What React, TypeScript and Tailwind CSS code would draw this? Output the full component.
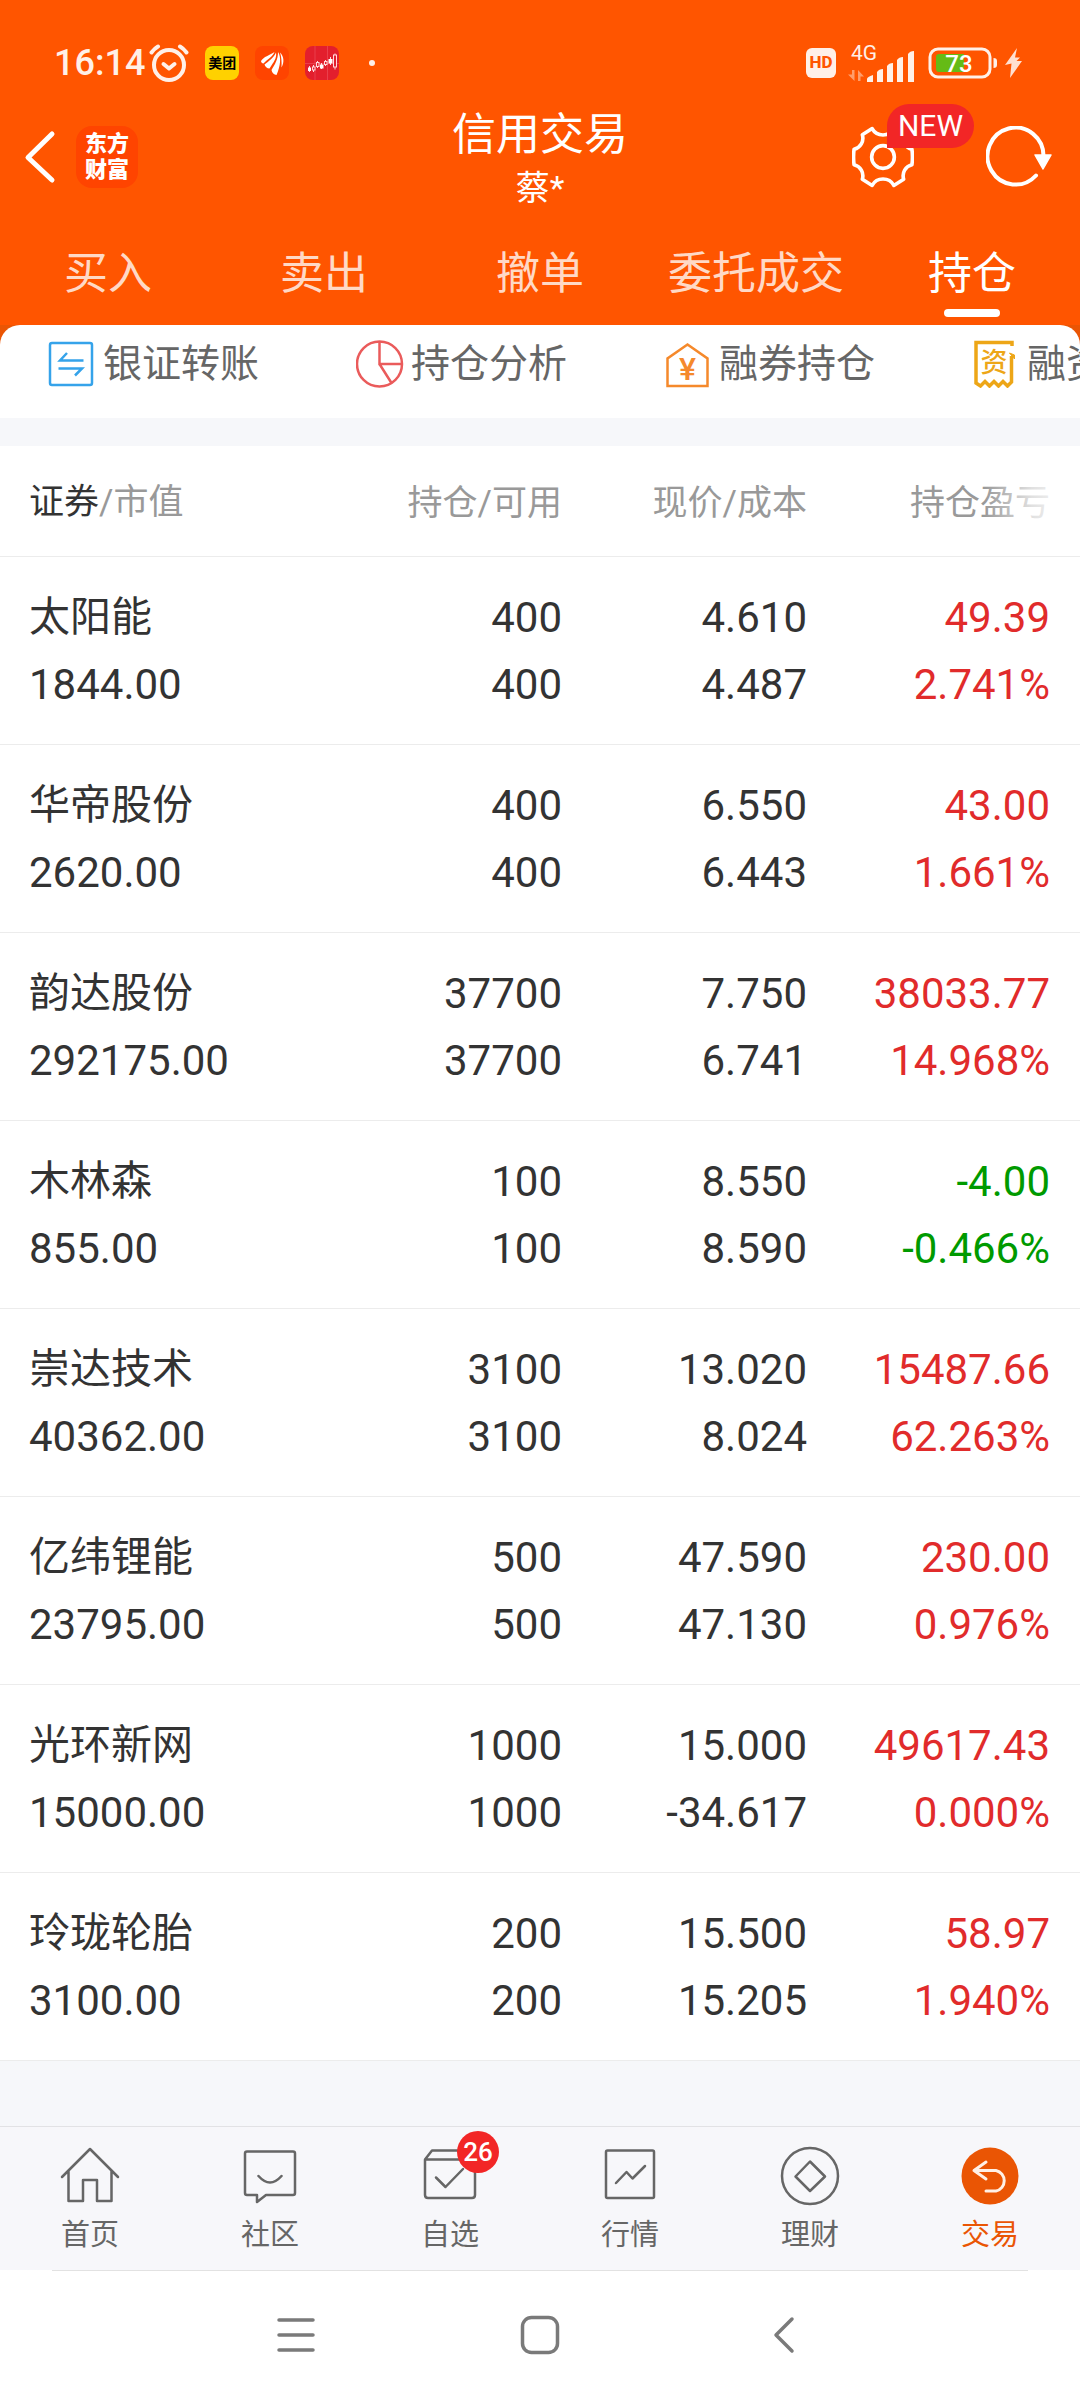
import { useState, type ReactNode } from "react";
import clsx from "clsx";

interface Holding {
  name: string;
  value: string;
  held: string;
  available: string;
  price: string;
  cost: string;
  profit: string;
  rate: string;
}

const holdings: Holding[] = [
  { name: "太阳能", value: "1844.00", held: "400", available: "400", price: "4.610", cost: "4.487", profit: "49.39", rate: "2.741%" },
  { name: "华帝股份", value: "2620.00", held: "400", available: "400", price: "6.550", cost: "6.443", profit: "43.00", rate: "1.661%" },
  { name: "韵达股份", value: "292175.00", held: "37700", available: "37700", price: "7.750", cost: "6.741", profit: "38033.77", rate: "14.968%" },
  { name: "木林森", value: "855.00", held: "100", available: "100", price: "8.550", cost: "8.590", profit: "-4.00", rate: "-0.466%" },
  { name: "崇达技术", value: "40362.00", held: "3100", available: "3100", price: "13.020", cost: "8.024", profit: "15487.66", rate: "62.263%" },
  { name: "亿纬锂能", value: "23795.00", held: "500", available: "500", price: "47.590", cost: "47.130", profit: "230.00", rate: "0.976%" },
  { name: "光环新网", value: "15000.00", held: "1000", available: "1000", price: "15.000", cost: "-34.617", profit: "49617.43", rate: "0.000%" },
  { name: "玲珑轮胎", value: "3100.00", held: "200", available: "200", price: "15.500", cost: "15.205", profit: "58.97", rate: "1.940%" },
];

const tabs = ["买入", "卖出", "撤单", "委托成交", "持仓"];

/* ---------- status bar ---------- */

function StatusBar() {
  return (
    <div className="flex h-[103px] items-center justify-between pt-[22px] pr-14 pl-[54px] text-[#fff0e8]">
      <div className="flex items-center">
        <span className="text-[36px] leading-none font-medium">16:14</span>
        <svg className="ml-1 h-10 w-10" viewBox="0 0 40 40" fill="none" stroke="currentColor" strokeWidth="4" strokeLinecap="round" strokeLinejoin="round">
          <circle cx="20" cy="22" r="15" />
          <path d="M14.500 21l5.500 4.500 5.500-4.500" />
          <path d="M2.500 9.500q3-4 6.500-6M37.500 9.500q-3-4-6.500-6" />
        </svg>
        <span className="ml-4 flex h-[34px] w-[34px] items-center justify-center rounded-lg bg-[#ffd100] text-[14px] leading-none font-bold text-black">美团</span>
        <svg className="ml-4 h-[34px] w-[34px]" viewBox="0 0 34 34">
          <rect width="34" height="34" rx="8" fill="#ff4400" />
          <g fill="#fff">
            <path d="M6 15C9 10.500 14 9.500 19.500 6C17.500 11 12.500 13 8.500 17.500C7 17.500 6.200 16.500 6 15Z" />
            <path d="M9.500 18.500C14 15 18.500 12 21 6.500C22 12.500 18.500 16 14.500 22.500C12 22.500 10 20.800 9.500 18.500Z" />
            <path d="M16.500 24C20 18 23 13.500 23 6C26.500 11 25.500 20 21.500 29C19 28.500 17 27 16.500 24Z" />
            <path d="M25 6.500C29 10.500 29.500 16 26.500 21.500C26.800 15.500 26.500 11.500 25 6.500Z" />
          </g>
        </svg>
        <svg className="ml-4 h-[34px] w-[34px]" viewBox="0 0 34 34">
          <rect width="34" height="34" rx="8" fill="#e31f2d" />
          <path d="M0 17.500h34M10 0v34M22.500 0v34" stroke="#ee5561" strokeWidth="0.600" />
          <g fill="none" stroke="#ffdadd">
            <path d="M4.500 20v6M8.500 19v7M12.500 15v7M16.500 17v6M20.500 14v6M25.500 11v8M30 7.500v16" />
            <rect x="7.500" y="21" width="2.500" height="3" fill="#e31f2d" />
            <rect x="11.500" y="16.500" width="2.500" height="4" fill="#e31f2d" />
            <rect x="19.500" y="15.500" width="2.500" height="3" fill="#e31f2d" />
            <rect x="28.500" y="9" width="3" height="12" fill="#e31f2d" />
          </g>
          <path d="M3 21.500h3v3.500h-3zM15 18.500h3.500v4h-3.500zM23.500 13h4v4.500h-4z" fill="#fff" />
        </svg>
        <span className="ml-[30px] h-[6px] w-[6px] rounded-full bg-current" />
      </div>

      <div className="flex items-center">
        <span className="flex h-[30px] w-[30px] items-center justify-center rounded-md bg-[#fff0e8] text-[17px] leading-none font-extrabold text-[#ff5500]">HD</span>
        <svg className="ml-3 h-12 w-[68px]" viewBox="0 0 68 48">
          <text x="3" y="21" fontSize="21" fill="currentColor">4G</text>
          <g fill="#ff9d6b">
            <path d="M4 31h2.500v11L0 35.500h4zM10 31l6 6.500h-3.500V42H10z" />
          </g>
          <g fill="currentColor">
            <path d="M19 40q0-2 6-4v7h-6zM29 33q2-3 6-3v13h-6zM39 27q2-3 6-3v19h-6zM49 21q2-3 6-3v25h-6zM60 15q2-3 6-3v31h-6z" />
          </g>
        </svg>
        <svg className="ml-3 h-8 w-[70px]" viewBox="0 0 70 32">
          <rect x="2" y="2" width="60" height="28" rx="8" fill="none" stroke="currentColor" strokeWidth="3" />
          <path d="M11 7h25v18H11q-3 0-3-3V10q0-3 3-3z" fill="#65bb16" />
          <path d="M65.500 11q3.500 0 3.500 3v4q0 3-3.500 3z" fill="currentColor" />
          <text x="31" y="24.500" textAnchor="middle" fontSize="24" fontWeight="500" fill="#fff">73</text>
        </svg>
        <svg className="ml-[6px] h-8 w-5" viewBox="0 0 20 32" fill="#ffe0d1">
          <path d="M13 1L1 18l6.500-1.500L6 31l12-17h-5.500l3.500-3.500H11z" />
        </svg>
      </div>
    </div>
  );
}

/* ---------- title ---------- */

function TitleBar() {
  return (
    <div className="grid grid-cols-[1fr_auto_1fr] items-center text-white">
      <div className="flex items-center pl-6">
        <button type="button" aria-label="返回" className="flex">
          <svg className="h-[54px] w-8" viewBox="0 0 32 54" fill="none" stroke="currentColor" strokeWidth="5" strokeLinecap="round" strokeLinejoin="round">
            <path d="M28 4L4 27.500L28 50" />
          </svg>
        </button>
        <a href="#home" className="ml-5 flex h-[62px] w-[62px] items-center justify-center rounded-2xl bg-[#ff4400] text-center text-[22px] leading-[26px] font-black">
          东方
          <br />
          财富
        </a>
      </div>

      <div className="pt-0.5 text-center">
        <h1 className="text-[44px] leading-[60px]">信用交易</h1>
        <p className="text-[34px] leading-[46px]">蔡*</p>
      </div>

      <div className="flex items-center justify-end gap-[72px] pr-7">
        <button type="button" aria-label="设置" className="relative flex">
          <svg className="h-[62px] w-[62px]" viewBox="0 0 60 60" fill="none" stroke="currentColor" strokeWidth="3.500" strokeLinejoin="round">
            <path d="M58 22.500Q59 30 58 37.500A11 11 0 0 0 50 51.500L40.500 57.500A12 12 0 0 0 19.500 57.500L10 51.500A11 11 0 0 0 2 37.500Q1 30 2 22.500A11 11 0 0 0 10 8.500L19.500 2.500A12 12 0 0 0 40.500 2.500L50 8.500A11 11 0 0 0 58 22.500Z" />
            <circle cx="30" cy="30" r="11" />
          </svg>
          <span className="absolute bottom-10 left-[35px] flex h-11 w-[87px] items-center justify-center rounded-[22px] rounded-bl-none bg-[#f22626] text-[30px] leading-none">NEW</span>
        </button>
        <button type="button" aria-label="刷新" className="flex">
          <svg className="h-[62px] w-[66px]" viewBox="0 0 66 62" fill="none" stroke="currentColor" strokeWidth="4" strokeLinecap="round">
            <path d="M57.500 31A28 28.500 0 1 0 50 49.500" />
            <path d="M49 29h16l-8 14z" fill="currentColor" strokeWidth="1.500" strokeLinejoin="round" />
          </svg>
        </button>
      </div>
    </div>
  );
}

/* ---------- shortcuts ---------- */

const shortcuts: { label: string; icon: ReactNode }[] = [
  {
    label: "银证转账",
    icon: (
      <g stroke="#35a3ea" strokeWidth="2.500" fill="none">
        <rect x="2" y="3" width="42" height="42" rx="2" />
        <path d="M35.500 20.500H12l7-7.500M10.500 28.500H34l-7 7" />
      </g>
    ),
  },
  {
    label: "持仓分析",
    icon: (
      <g stroke="#ea5b5b" strokeWidth="2.500" fill="none">
        <circle cx="23.500" cy="24" r="22.500" />
        <path d="M23.500 1.500V24H46M23.500 24L35.500 43" />
      </g>
    ),
  },
  {
    label: "融券持仓",
    icon: (
      <g stroke="#f5892b" strokeWidth="2.500" fill="none">
        <path d="M3.500 46V18.500L23.500 4.500L43.500 18.500V46Z" />
        <text x="23.500" y="40" textAnchor="middle" fontSize="32" fontWeight="500" fill="#f5892b" stroke="none">¥</text>
      </g>
    ),
  },
  {
    label: "融资持仓",
    icon: (
      <g stroke="#eda617" strokeWidth="3.500" fill="none">
        <path d="M40 6V2.500H4V43L8.500 46L13 41.500L17.500 46L22 41.500L26.500 46L31 41.500L35.500 46L39.500 42V16" />
        <path d="M37.500 13l5 6v-4z" fill="#eda617" strokeWidth="1" />
        <text x="22" y="32" textAnchor="middle" fontSize="27" fontWeight="500" fill="#eda617" stroke="none">资</text>
      </g>
    ),
  },
];

function Shortcuts() {
  return (
    <div className="bg-[#ea5504]">
      <nav className="flex overflow-hidden rounded-t-[20px] bg-white pt-[9px] pb-6 pl-12">
        {shortcuts.map((s) => (
          <a key={s.label} href="#shortcut" className="flex w-[308px] shrink-0 items-center gap-[7px] text-[39px] leading-[60px] text-[#666]">
            <svg className="h-12 w-12" viewBox="0 0 48 48">{s.icon}</svg>
            {s.label}
          </a>
        ))}
      </nav>
    </div>
  );
}

/* ---------- holdings ---------- */

function HoldingsTable() {
  return (
    <table className="w-full table-fixed border-collapse bg-white text-right text-[42px] leading-[67px] text-[#333]">
      <colgroup>
        <col />
        <col className="w-[250px]" />
        <col className="w-[245px]" />
        <col className="w-[273px]" />
      </colgroup>
      <thead>
        <tr className="h-[110px] border-b border-[#ececec] text-[35px] leading-[50px] text-[#999]">
          <th scope="col" className="pt-1 pl-[29px] text-left font-normal">
            <span className="text-[#333]">证券</span>/市值
          </th>
          <th scope="col" className="pt-1.5 font-normal">持仓/可用</th>
          <th scope="col" className="pt-1.5 font-normal">现价/成本</th>
          <th scope="col" className="relative pt-1.5 pr-[30px] font-normal">
            持仓盈亏
            <span className="absolute inset-y-0 right-0 w-24 bg-linear-to-r from-transparent via-white/70 to-white" />
          </th>
        </tr>
      </thead>
      <tbody>
        {holdings.map((h) => (
          <tr key={h.name} className="h-[188px] border-b border-[#ececec]">
            <td className="pt-0.5 pl-[29px] text-left">
              <div className="text-[41px]">{h.name}</div>
              <div>{h.value}</div>
            </td>
            <td className="pt-0.5">
              <div>{h.held}</div>
              <div>{h.available}</div>
            </td>
            <td className="pt-0.5">
              <div>{h.price}</div>
              <div>{h.cost}</div>
            </td>
            <td className={clsx("pt-0.5 pr-[30px]", h.profit.startsWith("-") ? "text-[#009a00]" : "text-[#e12b2b]")}>
              <div>{h.profit}</div>
              <div>{h.rate}</div>
            </td>
          </tr>
        ))}
      </tbody>
    </table>
  );
}

/* ---------- bottom bar ---------- */

const menu: { label: string; icon: ReactNode; badge?: number; active?: boolean }[] = [
  {
    label: "首页",
    icon: <path d="M2 31L30 3L58 31M8.500 25V55H23V34H37V55H51.500V25" />,
  },
  {
    label: "社区",
    icon: <path d="M7 5.500H53Q55 5.500 55 7.500V47Q55 49 53 49H26L17 56V49H7Q5 49 5 47V7.500Q5 5.500 7 5.500ZM18.500 30Q30 43 41.500 30" />,
  },
  {
    label: "自选",
    badge: 26,
    icon: <path d="M5 13.500L12 4.500H48L55 13.500V49Q55 52 52 52H8Q5 52 5 49V13.500H55M16 31.500L25.500 41L43 23" />,
  },
  {
    label: "行情",
    icon: <path d="M7.500 4.500H52.500Q54 4.500 54 6V50.500Q54 52 52.500 52H7.500Q6 52 6 50.500V6Q6 4.500 7.500 4.500ZM16 37L26.500 26L32.500 32.500L45 20" />,
  },
  {
    label: "理财",
    icon: (
      <>
        <circle cx="30" cy="30" r="28" />
        <path d="M30 15.500L45 30.500L30 45L15.500 30.500Z" />
      </>
    ),
  },
  {
    label: "交易",
    active: true,
    icon: (
      <>
        <circle cx="30" cy="30" r="28.500" fill="currentColor" stroke="none" />
        <path d="M26 16L14 24.500L26 33M14 24.500H36A10.500 10.500 0 0 1 36 45H26" stroke="#fff0e6" strokeWidth="3" />
      </>
    ),
  },
];

function BottomMenu() {
  return (
    <nav className="grid grid-cols-6 border-t border-[#e2e2e5] bg-[#f7f7fa] pt-[19px] pb-[14px]">
      {menu.map((m) => (
        <a key={m.label} href="#menu" className={clsx("flex flex-col items-center", m.active ? "text-[#ea5504]" : "text-[#666]")}>
          <span className="relative">
            <svg className="h-[60px] w-[60px]" viewBox="0 0 60 60" fill="none" stroke="currentColor" strokeWidth="2.500" strokeLinejoin="round" strokeLinecap="round">
              {m.icon}
            </svg>
            {m.badge && (
              <span className="absolute -top-[15px] left-[37px] flex h-[42px] w-[42px] items-center justify-center rounded-full bg-[#f22626] text-[26px] leading-none font-medium text-white">
                {m.badge}
              </span>
            )}
          </span>
          <span className="mt-2 text-[29px] leading-[42px]">{m.label}</span>
        </a>
      ))}
    </nav>
  );
}

function SystemNav() {
  return (
    <div className="bg-white">
      <div className="mx-[52px] border-t border-[#e2e2e2]" />
      <div className="flex items-center justify-center gap-[200px] pt-[42px] pb-[43px] text-[#7a7a7a]">
        <button type="button" aria-label="最近任务" className="flex">
          <svg className="h-11 w-11" viewBox="0 0 44 44" stroke="currentColor" strokeWidth="3.500" strokeLinecap="round">
            <path d="M5 7h34M5 22h34M5 37h34" />
          </svg>
        </button>
        <button type="button" aria-label="主屏幕" className="flex">
          <svg className="h-11 w-11" viewBox="0 0 44 44" fill="none" stroke="currentColor" strokeWidth="3.500">
            <rect x="4.500" y="4.500" width="35" height="35" rx="9" />
          </svg>
        </button>
        <button type="button" aria-label="后退" className="flex">
          <svg className="h-11 w-11" viewBox="0 0 44 44" fill="none" stroke="currentColor" strokeWidth="3.500" strokeLinecap="round" strokeLinejoin="round">
            <path d="M30 6L14 22L30 38" />
          </svg>
        </button>
      </div>
    </div>
  );
}

export default function App() {
  const [activeTab, setActiveTab] = useState("持仓");

  return (
    <div className="flex min-h-screen flex-col bg-[#f6f7fa] font-[Roboto,'Noto_Sans_CJK_SC',sans-serif]">
      <header className="bg-[#ff5500]">
        <StatusBar />
        <TitleBar />
        <div role="tablist" className="grid grid-cols-5 pt-[33px] pb-2">
          {tabs.map((tab) => (
            <button
              key={tab}
              type="button"
              role="tab"
              aria-selected={tab === activeTab}
              onClick={() => setActiveTab(tab)}
              className={clsx("flex flex-col items-center text-[44px] leading-[60px]", tab === activeTab ? "text-white" : "text-[#ffd9c6]")}
            >
              {tab}
              <span className={clsx("mt-[5px] h-2 w-14 rounded-full", tab === activeTab && "bg-white")} />
            </button>
          ))}
        </div>
      </header>

      <Shortcuts />

      <main className="mt-7 grow">
        <HoldingsTable />
      </main>

      <footer className="mt-16">
        <BottomMenu />
        <SystemNav />
      </footer>
    </div>
  );
}
